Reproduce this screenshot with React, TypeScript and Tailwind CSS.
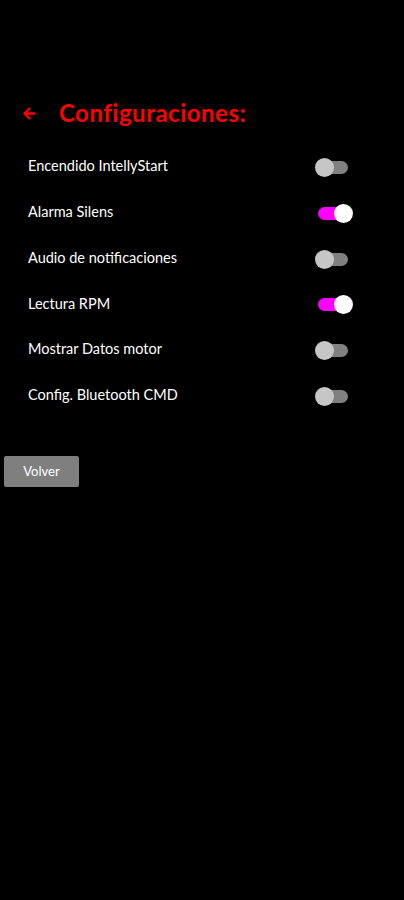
import React, { useState } from 'react';
import { ArrowLeft } from 'lucide-react';

const items = [
  { label: 'Encendido IntellyStart', on: false },
  { label: 'Alarma Silens', on: true },
  { label: 'Audio de notificaciones', on: false },
  { label: 'Lectura RPM', on: true },
  { label: 'Mostrar Datos motor', on: false },
  { label: 'Config. Bluetooth CMD', on: false },
];

function Toggle({ on, onClick }: { on: boolean; onClick: () => void }) {
  return (
    <button onClick={onClick} className="relative w-[38px] h-[19px]">
      <span
        className={`absolute left-[3px] top-[3px] w-[30px] h-[13px] rounded-full ${
          on ? 'bg-[#ff00ff]' : 'bg-[#808080]'
        }`}
      />
      <span
        className={`absolute top-0 w-[19px] h-[19px] rounded-full ${
          on ? 'left-[19px] bg-white' : 'left-0 bg-[#c6c6c6]'
        }`}
      />
    </button>
  );
}

export default function App() {
  const [settings, setSettings] = useState(items.map((i) => i.on));

  const flip = (idx: number) => {
    setSettings(settings.map((v, i) => (i === idx ? !v : v)));
  };

  return (
    <div className="w-[404px] h-[900px] bg-black font-['Lato',sans-serif]">
      <div className="pt-[97px]">
        <div className="flex items-center h-[32px] pl-[21px]">
          <ArrowLeft className="w-[17px] h-[17px] text-[#ff0000]" strokeWidth={3.2} />
          <h1 className="ml-[21px] text-[24px] font-bold text-[#ff0000] tracking-[0.5px]">Configuraciones:</h1>
        </div>

        <div className="mt-[16px]">
          {items.map((item, idx) => (
            <div key={item.label} className="flex items-center justify-between h-[45.7px] pl-[28px] pr-[51px]">
              <span className="text-[14.5px] text-white mt-[-3px]">{item.label}</span>
              <Toggle on={settings[idx]} onClick={() => flip(idx)} />
            </div>
          ))}
        </div>

        <div className="mt-[37px] pl-[4px]">
          <button className="w-[75px] h-[31px] rounded-[2px] bg-[#7f7f7f] text-white text-[13px]">
            Volver
          </button>
        </div>
      </div>
    </div>
  );
}
